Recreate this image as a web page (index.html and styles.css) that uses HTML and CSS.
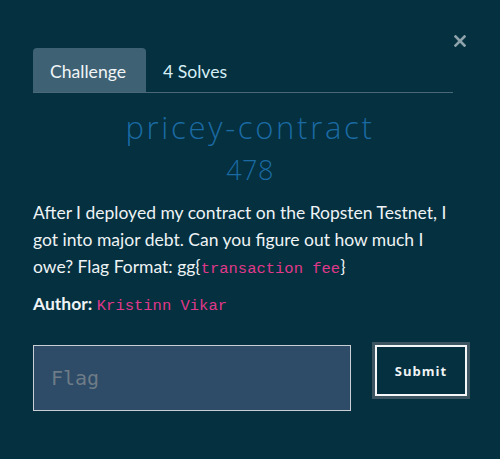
FILE: index.html
```html
<!DOCTYPE html>
<html>
<head>
<meta charset="utf-8">
<link rel="stylesheet" href="styles.css">
</head>
<body>
<div class="modal">
  <button class="close" aria-label="Close">
    <svg width="12" height="12" viewBox="0 0 12 12"><path d="M1.5 1.5 L10.5 10.5 M10.5 1.5 L1.5 10.5" stroke="#8ea2ab" stroke-width="2.6" stroke-linecap="square"/></svg>
  </button>
  <nav class="tabs">
    <span class="tab active">Challenge</span>
    <span class="tab">4 Solves</span>
  </nav>
  <h2 class="title">pricey-contract</h2>
  <h3 class="value">478</h3>
  <p class="desc">After I deployed my contract on the Ropsten Testnet, I got into major debt. Can you figure out how much I owe? Flag Format: gg{<code>transaction fee</code>}</p>
  <p class="author"><b>Author:</b> <code>Kristinn Vikar</code></p>
  <form class="submit-row">
    <input class="flag" type="text" placeholder="Flag">
    <button class="submit" type="button">Submit</button>
  </form>
</div>
</body>
</html>
```
FILE: styles.css
```css
html, body {
  margin: 0;
  padding: 0;
  background: #04303f;
}
body {
  width: 500px;
  height: 459px;
  overflow: hidden;
  font-family: Lato, "Liberation Sans", sans-serif;
  color: #eef3f5;
}
.modal {
  position: relative;
  padding: 48px 47px 0 33px;
}
.close {
  position: absolute;
  top: 35px;
  left: 454px;
  background: none;
  border: 0;
  padding: 0;
  width: 12px;
  height: 12px;
  display: block;
}
.close svg { display: block; }
.tabs {
  display: flex;
  border-bottom: 1px solid #4a6876;
  height: 44px;
}
.tab {
  display: flex;
  align-items: center;
  padding: 2px 17px 0 17px;
  font-size: 17.6px;
  color: #d6eef5;
  border-radius: 4px 4px 0 0;
}
.tab.active {
  background: #3e6173;
  color: #f1f5f7;
  width: 79px;
}
.title {
  margin: 14px 0 0;
  padding-left: 14px;
  text-align: center;
  font-family: "Open Sans", sans-serif;
  font-weight: 300;
  font-size: 31px;
  line-height: 40px;
  letter-spacing: 2.7px;
  color: #1b6aa3;
}
.value {
  margin: 5px 0 0;
  padding-left: 14px;
  text-align: center;
  font-family: "Open Sans", sans-serif;
  font-weight: 300;
  font-size: 27px;
  line-height: 36px;
  letter-spacing: 0.5px;
  color: #1b6aa3;
}
.desc {
  margin: 11px 0 0;
  font-size: 17.5px;
  line-height: 27px;
}
code {
  font-family: "Liberation Mono", monospace;
  font-size: 15.5px;
  line-height: 1;
  color: #e0388a;
}
.author {
  margin: 10px 0 0;
  font-size: 17.5px;
  line-height: 27px;
}
.author b { font-weight: 700; }
.submit-row {
  display: flex;
  align-items: flex-start;
  gap: 24px;
  margin-top: 28px;
}
.flag {
  flex: none;
  box-sizing: border-box;
  width: 318px;
  height: 66px;
  margin: 0;
  background: #2e4b68;
  border: 1px solid #c9cfd4;
  padding: 0 0 0 17px;
  font-family: "DejaVu Sans Mono", monospace;
  font-size: 20px;
  color: #fff;
  outline: none;
}
.flag::placeholder { color: #6d7c86; }
.submit {
  flex: none;
  box-sizing: border-box;
  width: 92px;
  height: 51px;
  margin: 0;
  background: #04303f;
  border: 2px solid #f4f6f7;
  box-shadow: 0 0 0 3px #3c5561;
  color: #f0f3f5;
  font-family: "Open Sans", sans-serif;
  font-weight: 700;
  font-size: 13px;
  letter-spacing: 1px;
  padding: 0;
}
```
